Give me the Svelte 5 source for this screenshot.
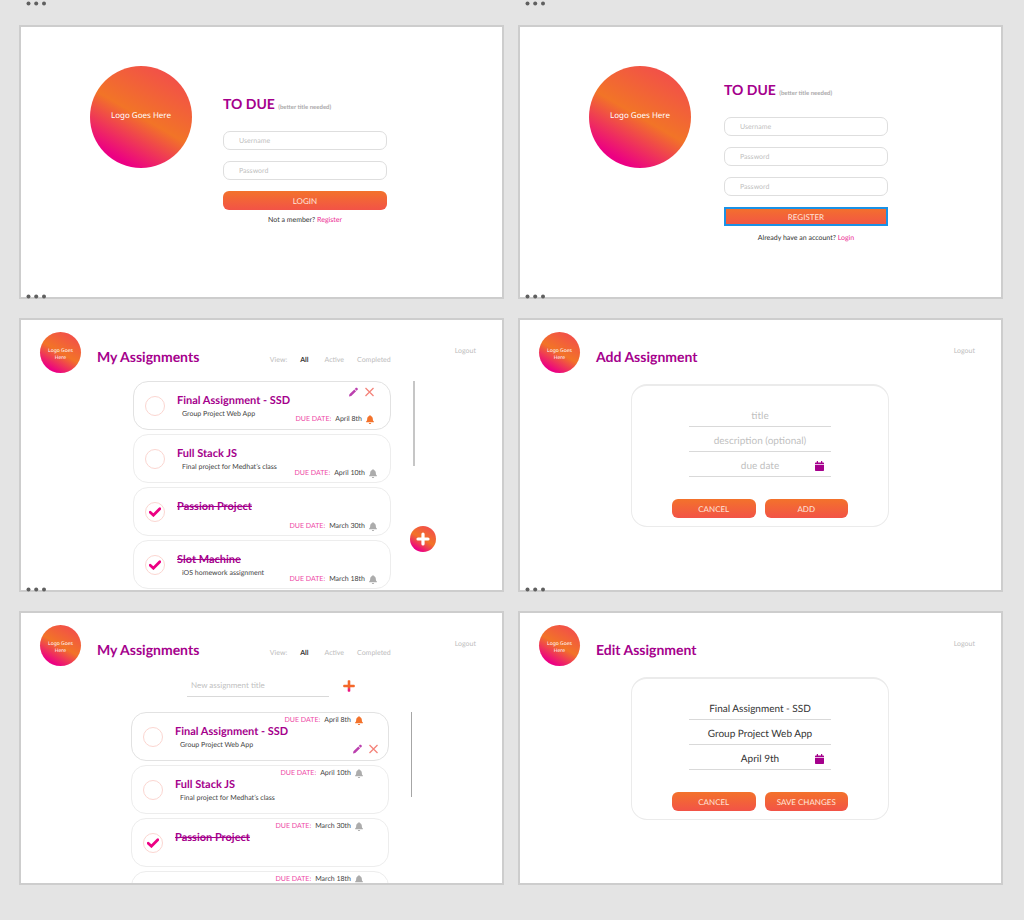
<script>
  const filters = ['All', 'Active', 'Completed'];

  let assignments = $state([
    { title: 'Final Assignment - SSD', note: 'Group Project Web App', due: 'April 8th', done: false, current: true },
    { title: 'Full Stack JS', note: 'Final project for Medhat’s class', due: 'April 10th', done: false, current: false },
    { title: 'Passion Project', note: '', due: 'March 30th', done: true, current: false },
    { title: 'Slot Machine', note: 'iOS homework assignment', due: 'March 18th', done: true, current: false }
  ]);
</script>

{#snippet dots()}
  <svg class="dots" viewBox="0 0 20 5" aria-hidden="true">
    <circle cx="2.5" cy="2.5" r="2" /><circle cx="10.2" cy="2.5" r="2" /><circle cx="18" cy="2.5" r="2" />
  </svg>
{/snippet}

{#snippet bell(active)}
  <svg class="bell" class:active viewBox="0 0 448 512" aria-hidden="true">
    <path d="M224 512c35 0 64-29 64-64H160c0 35 29 64 64 64zm215-150c-19-21-55-52-55-154 0-78-54-140-128-155V32a32 32 0 1 0-64 0v21C118 68 64 130 64 208c0 102-36 133-55 154-6 6-9 14-9 22 0 16 13 32 32 32h384c19 0 32-16 32-32 0-8-3-16-9-22z" />
  </svg>
{/snippet}

{#snippet calendar()}
  <button class="icon calendar" type="button" aria-label="Pick a date">
    <svg viewBox="0 0 18 20" aria-hidden="true">
      <path d="M0 6V4.500Q0 3 1.500 3H3.500V.6Q3.500 0 4.100 0H5.400Q6 0 6 .6V3H12V.6Q12 0 12.600 0H13.900Q14.500 0 14.500.6V3H16.500Q18 3 18 4.500V6ZM0 7.500H18V18.500Q18 20 16.500 20H1.500Q0 20 0 18.500Z" />
    </svg>
  </button>
{/snippet}

{#snippet header(title, withFilters)}
  <header>
    <div class="logo small">Logo Goes Here</div>
    <h2>{title}</h2>
    {#if withFilters}
      <nav aria-label="View">
        <span>View:</span>
        {#each filters as name}
          <a href="#{name.toLowerCase()}" class:selected={name === 'All'}>{name}</a>
        {/each}
      </nav>
    {/if}
    <a class="logout" href="#logout">Logout</a>
  </header>
{/snippet}

{#snippet auth(id, action, fields, question, other)}
  <section class="frame auth">
    <div class="logo">Logo Goes Here</div>
    <form class={id}>
      <h1>TO DUE <small>(better title needed)</small></h1>
      {#each fields as field}
        <input class="box" type={field === 'Password' ? 'password' : 'text'} placeholder={field} aria-label={field} autocomplete="off" />
      {/each}
      <button class="fill" class:focused={id === 'register'} type="button">{action}</button>
      <p>{question} <a href="#{other.toLowerCase()}">{other}</a></p>
    </form>
  </section>
{/snippet}

{#snippet cards(flipped)}
  <ul class="cards" class:flipped>
    {#each assignments as item, i}
      <li class="card" class:current={item.current}>
        <label class="check">
          <input type="checkbox" bind:checked={item.done} aria-label={item.title} />
          {#if item.done}
            <svg viewBox="0 0 12 10" aria-hidden="true"><path d="M1.200 5.300 4.400 8.200 10.800 1.700" /></svg>
          {/if}
        </label>
        <!-- the last card of the flipped list only peeks in with its due date -->
        {#if !flipped || i < assignments.length - 1}
          <div class="text">
            <h3 class:done={item.done}>{item.title}</h3>
            {#if item.note}<p>{item.note}</p>{/if}
          </div>
        {/if}
        <div class="side">
          {#if item.current}
            <div class="actions">
              <button class="icon" type="button" aria-label="Edit">
                <svg viewBox="0 0 18 18" aria-hidden="true"><path fill="#bb3fae" d="M0 18 .9 13.500 10.600 3.800 14.200 7.400 4.500 17.100ZM11.600 2.800 13.700.7Q14.800-.2 15.900.7L17.300 2.100Q18.200 3.200 17.300 4.300L15.200 6.400Z" /></svg>
              </button>
              <button class="icon" type="button" aria-label="Delete">
                <svg viewBox="0 0 18 18" aria-hidden="true"><path fill="none" stroke="#f4837a" stroke-width="2.600" d="M1 1 17 17M17 1 1 17" /></svg>
              </button>
            </div>
          {/if}
          <div class="due"><span>DUE DATE:</span> <time>{item.due}</time> {@render bell(item.current)}</div>
        </div>
      </li>
    {/each}
  </ul>
{/snippet}

{#snippet editor(action, values)}
  <div class="body">
    <form class="editor">
      <input class="line" type="text" placeholder="title" value={values[0]} aria-label="Title" />
      <input class="line" type="text" placeholder="description (optional)" value={values[1]} aria-label="Description" />
      <div class="date">
        <input class="line" type="text" placeholder="due date" value={values[2]} aria-label="Due date" />
        {@render calendar()}
      </div>
      <div class="buttons">
        <button class="fill" type="button">CANCEL</button>
        <button class="fill" type="button">{action}</button>
      </div>
    </form>
  </div>
{/snippet}

<main>
  <div class="artboard">
    {@render dots()}
    {@render auth('login', 'LOGIN', ['Username', 'Password'], 'Not a member?', 'Register')}
  </div>

  <div class="artboard">
    {@render dots()}
    {@render auth('register', 'REGISTER', ['Username', 'Password', 'Password'], 'Already have an account?', 'Login')}
  </div>

  <div class="artboard">
    {@render dots()}
    <section class="frame">
      {@render header('My Assignments', true)}
      <div class="body list">
        {@render cards(false)}
        <div class="rail">
          <div class="bar"></div>
          <button class="add" type="button" aria-label="Add assignment">
            <svg viewBox="0 0 26 26" aria-hidden="true"><path fill="none" stroke="#fff" stroke-width="3.200" stroke-linecap="round" d="M13 8V18M8 13H18" /></svg>
          </button>
        </div>
      </div>
    </section>
  </div>

  <div class="artboard">
    {@render dots()}
    <section class="frame">
      {@render header('Add Assignment', false)}
      {@render editor('ADD', ['', '', ''])}
    </section>
  </div>

  <div class="artboard">
    {@render dots()}
    <section class="frame">
      {@render header('My Assignments', true)}
      <div class="body list quick">
        <form class="new">
          <input class="line" type="text" placeholder="New assignment title" aria-label="New assignment title" />
          <button class="icon plus" type="button" aria-label="Add">
            <svg viewBox="0 0 12 12" aria-hidden="true">
              <defs>
                <linearGradient id="plus" x1="0" y1="0" x2="0" y2="1">
                  <stop offset=".6" stop-color="#f4682a" /><stop offset=".85" stop-color="#ec1482" />
                </linearGradient>
              </defs>
              <path fill="url(#plus)" d="M4.700 1Q4.700.2 5.500.2H6.500Q7.300.2 7.300 1V4.700H11Q11.800 4.700 11.800 5.500V6.500Q11.800 7.300 11 7.300H7.300V11Q7.300 11.800 6.500 11.800H5.500Q4.700 11.800 4.700 11V7.300H1Q.2 7.300.2 6.500V5.500Q.2 4.700 1 4.700H4.700Z" />
            </svg>
          </button>
        </form>
        {@render cards(true)}
        <div class="rail"><div class="bar thin"></div></div>
      </div>
    </section>
  </div>

  <div class="artboard">
    {@render dots()}
    <section class="frame">
      {@render header('Edit Assignment', false)}
      {@render editor('SAVE CHANGES', ['Final Assignment - SSD', 'Group Project Web App', 'April 9th'])}
    </section>
  </div>
</main>

<style>
  :global(body) {
    margin: 0;
    background: #e4e4e4;
  }
  * {
    box-sizing: border-box;
  }
  main {
    display: grid;
    grid-template-columns: repeat(2, minmax(0, 1fr));
    gap: 19px 14px;
    padding: 25px 21px 34px 19px;
    font-family: Lato, 'Open Sans', sans-serif;
    font-size: 7px;
    line-height: 10px;
    color: #333;
    text-rendering: geometricPrecision;
  }
  h1, h2, h3, p, ul {
    margin: 0;
    padding: 0;
  }
  a {
    color: inherit;
    text-decoration: none;
  }
  button, input {
    font: inherit;
    margin: 0;
    padding: 0;
    border: 0;
    background: none;
    color: inherit;
    text-rendering: inherit;
  }
  svg {
    display: block;
  }

  .artboard {
    position: relative;
  }
  .dots {
    position: absolute;
    z-index: 1;
    top: -24px;
    left: 7px;
    width: 20px;
    height: 5px;
    fill: #5f5f5f;
  }
  .frame {
    aspect-ratio: 485 / 274;
    overflow: hidden;
    border: 2px solid #cdcdcd;
    background: #fff;
  }

  .logo {
    flex: none;
    display: flex;
    align-items: center;
    justify-content: center;
    width: 102px;
    height: 102px;
    padding-bottom: 2px;
    border-radius: 50%;
    background: linear-gradient(30deg, #ec0083 16%, #f27427 50%, #f25049 87%);
    color: #fff;
    font: 8px/12px 'Noto Sans', sans-serif;
    text-align: center;
  }
  .logo.small {
    width: 41px;
    height: 41px;
    padding: 5px 5px 0;
    font-size: 5px;
    line-height: 7px;
  }

  .auth {
    display: flex;
    align-items: flex-start;
    gap: 31px;
    padding: 39px 20px 0 69px;
  }
  .auth form {
    flex: 0 1 164px;
    display: flex;
    flex-direction: column;
    gap: 11px;
    padding-top: 29px;
  }
  .auth form.register {
    margin-left: 2px;
    padding-top: 15px;
  }
  h1 {
    margin-bottom: 3px;
    color: #a5008c;
    font-size: 14px;
    font-weight: 700;
    line-height: 18px;
    white-space: nowrap;
  }
  h1 small {
    color: #aaa;
    font-size: 6px;
  }
  .box {
    height: 19px;
    padding: 0 15px;
    border: 1px solid #dedede;
    border-radius: 7px;
  }
  input::placeholder {
    color: #bfbfbf;
    opacity: 1;
  }
  .fill {
    height: 19px;
    border-radius: 6px;
    background: linear-gradient(#f3722b, #f25347);
    color: #ffe6dc;
    font-size: 8px;
  }
  .focused {
    border-radius: 0;
    outline: 2px solid #1a92e6;
    outline-offset: -2px;
  }
  .auth p {
    margin-top: -6px;
    text-align: center;
  }
  .register p {
    margin-top: -4px;
  }
  .auth p a {
    color: #ec2a93;
  }

  header {
    display: flex;
    align-items: flex-start;
    padding: 12px 26px 0 19px;
    color: #bdbdbd;
  }
  h2 {
    margin: 16px auto 0 16px;
    color: #a5008c;
    font-size: 14px;
    line-height: 18px;
    white-space: nowrap;
  }
  nav {
    display: flex;
    gap: 13px;
    margin: 23px 64px 0 0;
  }
  .selected {
    margin-right: 3px;
    color: #333;
    font-weight: 700;
  }
  .logout {
    margin-top: 14px;
  }

  .body {
    display: grid;
    grid-template-columns: 111fr 258fr 112fr;
    padding-top: 11px;
  }
  .body.list {
    grid-template-columns: 112fr 258fr 111fr;
    padding-top: 8px;
  }
  .body.quick {
    grid-template-columns: 110fr 258fr 113fr;
  }
  .cards {
    grid-column: 2;
    display: flex;
    flex-direction: column;
    gap: 4px;
    list-style: none;
  }
  .card {
    display: grid;
    grid-template-columns: 20px minmax(0, 1fr);
    column-gap: 12px;
    height: 49px;
    padding-left: 11px;
    border: 1px solid #ededed;
    border-radius: 15px;
  }
  .card.current {
    border-color: #e2e2e2;
  }
  .check {
    position: relative;
    align-self: center;
    height: 20px;
  }
  .check input {
    display: block;
    appearance: none;
    width: 20px;
    height: 20px;
    border: 1px solid #fbd6d1;
    border-radius: 50%;
  }
  .check svg {
    position: absolute;
    top: 5px;
    left: 4px;
    width: 12px;
    height: 10px;
    fill: none;
    stroke: #ec0083;
    stroke-width: 2.800;
    stroke-linecap: round;
  }
  .text, .side {
    grid-row: 1;
    grid-column: 2;
  }
  .text {
    padding-top: 13px;
  }
  h3 {
    color: #a5008c;
    font-size: 11px;
    line-height: 12px;
  }
  .done {
    text-decoration: line-through;
    text-decoration-thickness: 1px;
  }
  .text p {
    padding-left: 5px;
    line-height: 14px;
    color: #444;
  }
  .side {
    display: flex;
    flex-direction: column;
    justify-content: space-between;
    align-items: flex-end;
    padding: 5px 13px 4px 0;
  }
  .current .side {
    padding: 5px 16px 5px 0;
  }
  .actions {
    display: flex;
    gap: 7px;
  }
  .icon {
    width: 9px;
    height: 10px;
  }
  .icon svg {
    width: 100%;
    height: 100%;
  }
  .due {
    display: flex;
    align-items: center;
    gap: 4px;
    margin-top: auto;
    color: #444;
  }
  .due span {
    color: #ee4aa6;
  }
  .bell {
    width: 8px;
    height: 9px;
    fill: #acacac;
  }
  .bell.active {
    fill: #f3722b;
  }
  .flipped .side {
    flex-direction: column-reverse;
    padding: 2px 25px 6px 0;
  }
  .flipped .due {
    margin: 0 0 auto;
  }
  .flipped .actions {
    margin-right: -15px;
  }

  .rail {
    grid-column: 3;
    padding-left: 19px;
  }
  .bar {
    width: 2px;
    height: 85px;
    margin-left: 3px;
    background: #c6c6c6;
  }
  .bar.thin {
    width: 1px;
    background: #a6a6a6;
  }
  .add {
    display: block;
    width: 26px;
    height: 26px;
    margin-top: 60px;
    border-radius: 50%;
    background: linear-gradient(30deg, #ec0083 16%, #f27427 50%, #f25049 87%);
  }

  .line {
    display: block;
    width: 100%;
    height: 25px;
    border-bottom: 1px solid #d9d9d9;
    font-size: 10px;
    text-align: center;
  }
  .new {
    grid-column: 1 / -1;
    display: flex;
    align-items: center;
    gap: 14px;
    margin-left: 166px;
    margin-bottom: 15px;
  }
  .new .line {
    width: 142px;
    height: 23px;
    padding: 0 4px;
    font-size: 8px;
    text-align: left;
  }
  .plus {
    width: 12px;
    height: 12px;
  }

  .editor {
    grid-column: 2;
    padding: 16px 40px 8px;
    border: 1px solid #ebebeb;
    border-top-width: 2px;
    border-radius: 16px;
  }
  .editor .line {
    padding-top: 3px;
  }
  .editor > .line,
  .date {
    max-width: 142px;
    margin: 0 auto;
  }
  .date {
    position: relative;
  }
  .calendar {
    position: absolute;
    top: 9px;
    right: 7px;
    fill: #a5008c;
  }
  .buttons {
    display: grid;
    grid-template-columns: 1fr 1fr;
    gap: 9px;
    margin-top: 22px;
  }
</style>
